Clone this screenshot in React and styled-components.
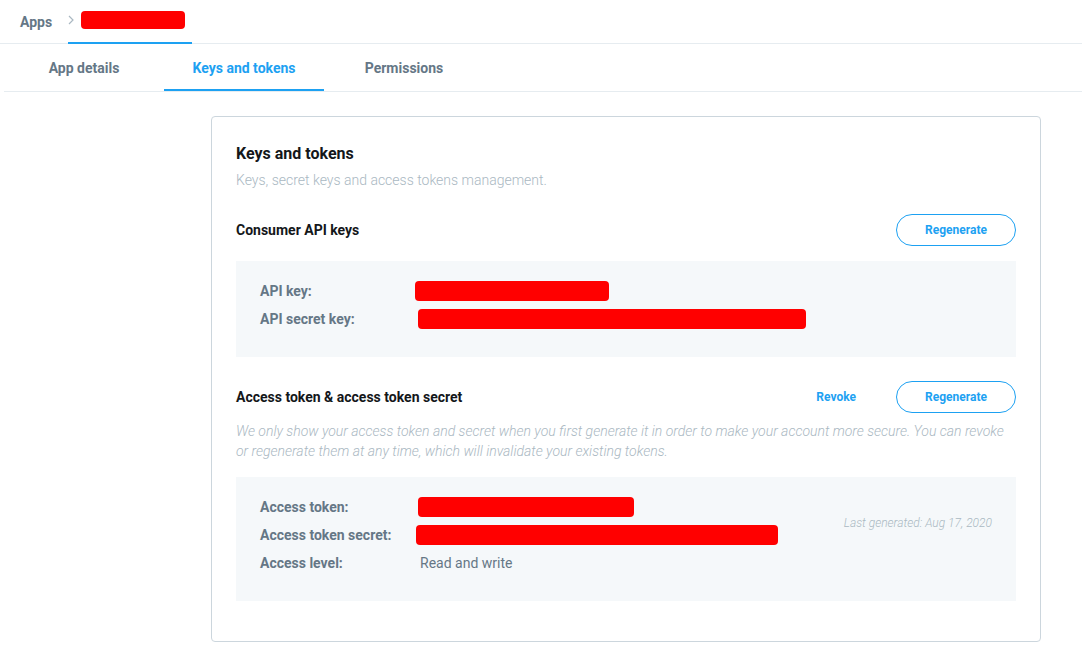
import React from 'react';
import styled, { createGlobalStyle } from 'styled-components';

const GlobalStyle = createGlobalStyle`
  body {
    margin: 0;
    background: #fff;
    font-family: Roboto, "Liberation Sans", sans-serif;
    color: #14171a;
  }
`;

const consumerRows = [
  { label: 'API key:', redact: 194, shift: 0 },
  { label: 'API secret key:', redact: 388, shift: 3 },
];

const accessRows = [
  { label: 'Access token:', redact: 216, shift: -2 },
  { label: 'Access token secret:', redact: 362, shift: -4 },
  { label: 'Access level:', text: 'Read and write' },
];

const App = () => {
  return (
    <Page>
      <GlobalStyle />
      <Crumbs>
        <Crumb>Apps</Crumb>
        <ActiveCrumb>
          <Chevron viewBox="0 0 6 10"><path d="M1 1l4 4-4 4" /></Chevron>
          <Redact w={104} h={18} />
        </ActiveCrumb>
      </Crumbs>
      <Tabs>
        <Tab>App details</Tab>
        <Tab active>Keys and tokens</Tab>
        <Tab>Permissions</Tab>
      </Tabs>
      <Main>
        <Card>
          <Title>Keys and tokens</Title>
          <Subtitle>Keys, secret keys and access tokens management.</Subtitle>

          <SectionHead>
            <SectionTitle>Consumer API keys</SectionTitle>
            <Actions>
              <Button>Regenerate</Button>
            </Actions>
          </SectionHead>
          <InfoBox>
            <Rows labelWidth={155}>
              {consumerRows.map(r => (
                <React.Fragment key={r.label}>
                  <Label>{r.label}</Label>
                  <Value><Redact w={r.redact} h={20} style={{ marginLeft: r.shift }} /></Value>
                </React.Fragment>
              ))}
            </Rows>
          </InfoBox>

          <SectionHead>
            <SectionTitle>Access token &amp; access token secret</SectionTitle>
            <Actions>
              <LinkButton>Revoke</LinkButton>
              <Button>Regenerate</Button>
            </Actions>
          </SectionHead>
          <Note>
            We only show your access token and secret when you first generate it in order to make your account more secure. You can revoke or regenerate them at any time, which will invalidate your existing tokens.
          </Note>
          <InfoBox small>
            <Rows labelWidth={160}>
              {accessRows.map(r => (
                <React.Fragment key={r.label}>
                  <Label>{r.label}</Label>
                  <Value>
                    {r.text ? r.text : <Redact w={r.redact} h={20} style={{ marginLeft: r.shift }} />}
                  </Value>
                </React.Fragment>
              ))}
            </Rows>
            <Stamp>Last generated: Aug 17, 2020</Stamp>
          </InfoBox>
        </Card>
      </Main>
    </Page>
  );
};

export default App;

const Page = styled.div`
  width: 1082px;
  min-height: 659px;
`;

const Crumbs = styled.div`
  display: flex;
  align-items: stretch;
  height: 43px;
  border-bottom: 1px solid #e6ecf0;
  box-sizing: content-box;
`;

const Crumb = styled.div`
  display: flex;
  align-items: center;
  padding: 0 16px 0 20px;
  font-size: 14px;
  font-weight: 700;
  color: #657786;
  padding-top: 1px;
  box-sizing: border-box;
`;

const ActiveCrumb = styled.div`
  display: flex;
  align-items: center;
  gap: 7px;
  padding: 0 7px 2px 0;
  border-bottom: 2px solid #1da1f2;
  margin-bottom: -1px;
`;

const Chevron = styled.svg`
  width: 6px;
  height: 10px;
  fill: none;
  stroke: #aab8c2;
  stroke-width: 1.2;
`;

const Redact = styled.span`
  display: inline-block;
  width: ${p => p.w}px;
  height: ${p => p.h}px;
  background: #ff0000;
  border-radius: 4px;
  vertical-align: middle;
`;

const Tabs = styled.div`
  display: flex;
  margin-left: 4px;
  border-bottom: 1px solid #e6ecf0;
`;

const Tab = styled.div`
  width: 160px;
  height: 47px;
  display: flex;
  align-items: center;
  justify-content: center;
  font-size: 14px;
  font-weight: 700;
  color: ${p => (p.active ? '#1da1f2' : '#657786')};
  box-shadow: ${p => (p.active ? 'inset 0 -2px 0 #1da1f2' : 'none')};
  box-sizing: border-box;
`;

const Main = styled.div`
  padding: 24px 0 0 211px;
`;

const Card = styled.div`
  width: 830px;
  box-sizing: border-box;
  border: 1px solid #ccd6dd;
  border-radius: 4px;
  padding: 25px 24px 40px 24px;
`;

const Title = styled.h2`
  margin: 0;
  font-size: 16px;
  font-weight: 700;
  line-height: 24px;
  color: #14171a;
`;

const Subtitle = styled.p`
  margin: 4px 0 0;
  font-size: 14px;
  line-height: 20px;
  font-weight: 300;
  color: #aab8c2;
`;

const SectionHead = styled.div`
  display: flex;
  align-items: center;
  justify-content: space-between;
  height: 32px;
  margin-top: 24px;
`;

const SectionTitle = styled.h3`
  margin: 0;
  font-size: 14px;
  font-weight: 700;
  color: #14171a;
`;

const Actions = styled.div`
  display: flex;
  align-items: center;
  gap: 40px;
`;

const Button = styled.button`
  width: 120px;
  height: 32px;
  border: 1px solid #1da1f2;
  border-radius: 16px;
  background: #fff;
  color: #1da1f2;
  font-family: Roboto, "Liberation Sans", sans-serif;
  font-size: 12px;
  font-weight: 700;
  cursor: pointer;
`;

const LinkButton = styled.button`
  border: none;
  background: none;
  padding: 0;
  color: #1da1f2;
  font-family: Roboto, "Liberation Sans", sans-serif;
  font-size: 12px;
  font-weight: 700;
  cursor: pointer;
`;

const Note = styled.p`
  margin: 8px 0 0;
  font-size: 14px;
  line-height: 20px;
  font-style: italic;
  font-weight: 300;
  color: #aab8c2;
`;

const InfoBox = styled.div`
  display: flex;
  justify-content: space-between;
  align-items: flex-start;
  margin-top: ${p => (p.small ? '16px' : '15px')};
  padding: 16px 24px 24px;
  background: #f5f8fa;
`;

const Rows = styled.div`
  display: grid;
  grid-template-columns: ${p => p.labelWidth}px auto;
  grid-auto-rows: 28px;
  align-items: center;
`;

const Label = styled.div`
  font-size: 14px;
  font-weight: 700;
  color: #657786;
`;

const Value = styled.div`
  display: flex;
  align-items: center;
  font-size: 14px;
  color: #657786;
`;

const Stamp = styled.div`
  margin-top: 22px;
  font-size: 12px;
  line-height: 16px;
  font-style: italic;
  font-weight: 300;
  color: #aab8c2;
`;
